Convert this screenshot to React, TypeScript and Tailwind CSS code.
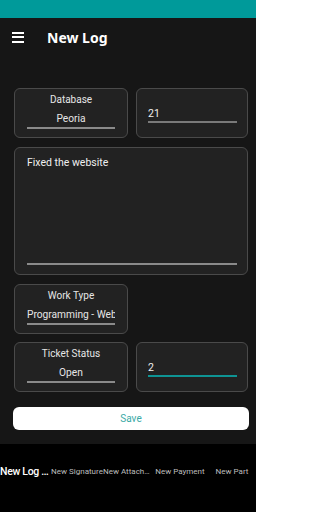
import React from 'react'

const NAV = [
  { label: 'New Log Entry', w: 'w-[51px]', active: true },
  { label: 'New Signature', w: 'w-[52px]', active: false },
  { label: 'New Attachment', w: 'w-[48px]', active: false },
  { label: 'New Payment', w: 'w-[58px]', active: false },
  { label: 'New Part', w: 'w-[46px]', active: false },
]

function LabelCard({ label, value }: { label: string; value: string }) {
  return (
    <div className="h-[50px] rounded-[6px] border border-[#4a4a4a] bg-[#222222] px-[12px] pt-[3px] flex flex-col items-center">
      <p className="text-[10px] leading-[16px] text-[#e6e6e6]">{label}</p>
      <div className="w-full mt-[2px] border-b-[2px] border-[#8a8a8a] overflow-hidden">
        <p className="text-[10.2px] leading-[17px] text-[#e6e6e6] text-center whitespace-nowrap">{value}</p>
      </div>
    </div>
  )
}

function InputCard({ value, focused }: { value: string; focused?: boolean }) {
  return (
    <div className="h-[50px] rounded-[6px] border border-[#4a4a4a] bg-[#222222] pl-[11px] pr-[10px] pt-[18px]">
      <div className={focused ? 'border-b-[2px] border-[#0e9494]' : 'border-b-[2px] border-[#7a7a7a]'}>
        <p className="text-[10.5px] leading-[14px] text-[#f0f0f0]">{value}</p>
      </div>
    </div>
  )
}

export default function App() {
  return (
    <div className="w-[256px] h-[512px] flex flex-col bg-[#161616] overflow-hidden" style={{ fontFamily: 'Roboto, sans-serif' }}>
      {/* status bar */}
      <div className="h-[18px] bg-[#009a9a] shrink-0" />

      {/* toolbar */}
      <div className="h-[38px] flex items-center shrink-0">
        <div className="ml-[12px] w-[12px] flex flex-col gap-[2.5px]">
          <div className="h-[2px] bg-white" />
          <div className="h-[2px] bg-white" />
          <div className="h-[2px] bg-white" />
        </div>
        <h1 className="ml-[23px] text-[14px] font-bold text-white" style={{ fontFamily: '"Noto Sans", sans-serif' }}>New Log</h1>
      </div>

      {/* form */}
      <div className="pl-[14px] pr-[8px] pt-[32px] grid grid-cols-[114px_112px] gap-x-[8px]">
        <LabelCard label="Database" value="Peoria" />
        <InputCard value="21" />

        <div className="col-span-2 mt-[9px] h-[128px] rounded-[6px] border border-[#4a4a4a] bg-[#222222] pl-[12px] pr-[10px] pt-[7px] pb-[9px] flex flex-col">
          <p className="text-[10.5px] leading-[15px] text-[#f0f0f0]">Fixed the website</p>
          <div className="flex-1" />
          <div className="border-b-[2px] border-[#8a8a8a]" />
        </div>

        <div className="mt-[9px]">
          <LabelCard label="Work Type" value="Programming - Website" />
        </div>
        <div />

        <div className="mt-[8px]">
          <LabelCard label="Ticket Status" value="Open" />
        </div>
        <div className="mt-[8px]">
          <InputCard value="2" focused />
        </div>
      </div>

      <div className="pl-[13px] pr-[7px] mt-[13px]">
        <button className="w-full h-[23px] rounded-[6px] bg-white text-[10px] text-[#3aa9a6]">Save</button>
      </div>

      <div className="flex-1" />

      {/* bottom tabs */}
      <div className="h-[68px] bg-black flex items-start pt-[20px] shrink-0">
        {NAV.map((n) => (
          <div key={n.label} className={`${n.w} shrink-0 text-center overflow-hidden`}>
            <p
              className={
                n.active
                  ? 'text-[10.5px] leading-[16px] font-medium text-white truncate tracking-[-0.3px]'
                  : 'text-[8px] leading-[16px] text-[#bdbdbd] truncate'
              }
            >
              {n.label}
            </p>
          </div>
        ))}
      </div>
    </div>
  )
}
